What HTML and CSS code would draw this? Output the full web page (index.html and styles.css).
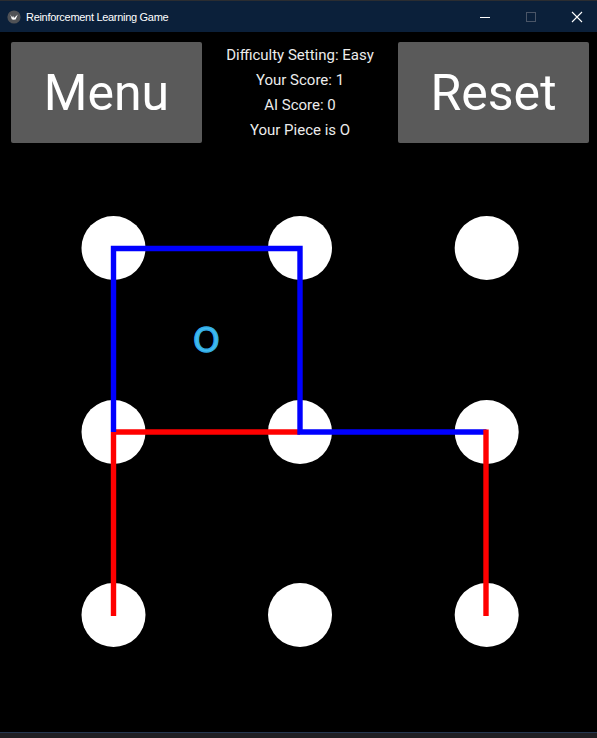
FILE: index.html
```html
<!DOCTYPE html>
<html>
<head>
<meta charset="utf-8">
<title>Reinforcement Learning Game</title>
<link rel="stylesheet" href="styles.css">
</head>
<body>
<div class="window">
  <div class="titlebar">
    <div class="app-icon">
      <svg width="14" height="14" viewBox="0 0 14 14">
        <circle cx="7" cy="7" r="6.6" fill="#505256"/>
        <path d="M3.2 4.2 L5.2 7.6 L6.1 5.8 L7 8 L10.8 4.6 L8.6 9.4 L6.3 9.8 L4.8 9.2 Z" fill="#ffffff"/>
      </svg>
    </div>
    <div class="title">Reinforcement Learning Game</div>
    <div class="controls">
      <div class="ctl">
        <svg width="12" height="12" viewBox="0 0 12 12"><line x1="1" y1="6.5" x2="11" y2="6.5" stroke="#ffffff" stroke-width="1"/></svg>
      </div>
      <div class="ctl">
        <svg width="12" height="12" viewBox="0 0 12 12"><rect x="1.5" y="1.5" width="9" height="9" fill="none" stroke="#4a5567" stroke-width="1"/></svg>
      </div>
      <div class="ctl">
        <svg width="12" height="12" viewBox="0 0 12 12"><path d="M1 1 L11 11 M11 1 L1 11" stroke="#ffffff" stroke-width="1.1"/></svg>
      </div>
    </div>
  </div>
  <div class="app">
    <div class="header">
      <div class="btn">Menu</div>
      <div class="info">
        <div>Difficulty Setting: Easy</div>
        <div>Your Score: 1</div>
        <div>AI Score: 0</div>
        <div>Your Piece is O</div>
      </div>
      <div class="btn">Reset</div>
    </div>
    <svg class="board" width="597" height="592" viewBox="0 140 597 592">
      <g fill="#ffffff">
        <circle cx="113.5" cy="248" r="32"/>
        <circle cx="300" cy="248" r="32"/>
        <circle cx="486.7" cy="248" r="32"/>
        <circle cx="113.5" cy="432" r="32"/>
        <circle cx="300" cy="432" r="32"/>
        <circle cx="486.7" cy="432" r="32"/>
        <circle cx="113.5" cy="615" r="32"/>
        <circle cx="300" cy="615" r="32"/>
        <circle cx="486.7" cy="615" r="32"/>
      </g>
      <g stroke-width="5.4" fill="none" stroke-linecap="butt">
        <line x1="113.5" y1="432" x2="300" y2="432" stroke="#ff0000"/>
        <path d="M113.5 432 L113.5 248.5 L300 248.5 L300 432 L486.5 432" stroke="#0000ff" stroke-linejoin="miter"/>
        <line x1="113.5" y1="432" x2="113.5" y2="616" stroke="#ff0000"/>
        <line x1="486" y1="429.5" x2="486" y2="616" stroke="#ff0000"/>
      </g>
      <text class="piece" x="206.3" y="351.5" text-anchor="middle">O</text>
    </svg>
  </div>
  <div class="bottombar"></div>
</div>
</body>
</html>
```
FILE: styles.css
```css
html, body {
  margin: 0;
  padding: 0;
  background: #000000;
}

.window {
  width: 597px;
  height: 738px;
  display: flex;
  flex-direction: column;
  overflow: hidden;
}

.titlebar {
  height: 31px;
  border-top: 1px solid #2b2d31;
  background: #0b203a;
  display: flex;
  align-items: center;
  flex-shrink: 0;
}

.app-icon {
  width: 14px;
  height: 14px;
  margin-left: 7px;
  display: flex;
}

.title {
  margin-left: 5px;
  color: #ffffff;
  font-family: "Liberation Sans", Arial, sans-serif;
  font-size: 11px;
  letter-spacing: -0.3px;
  flex: 1;
}

.controls {
  display: flex;
  height: 100%;
  margin-right: -3px;
}

.ctl {
  width: 46px;
  display: flex;
  align-items: center;
  justify-content: center;
}

.ctl svg {
  display: block;
}

.app {
  height: 700px;
  background: #000000;
  display: flex;
  flex-direction: column;
}

.header {
  display: grid;
  grid-template-columns: 191px 1fr 191px;
  height: 98px;
  padding: 10px 8px 0 11px;
  flex-shrink: 0;
}

.btn {
  background: #5a5a5a;
  border-radius: 2px;
  color: #ffffff;
  font-family: Roboto, "Liberation Sans", sans-serif;
  font-size: 50px;
  display: flex;
  align-items: center;
  justify-content: center;
}

.info {
  font-family: Roboto, "Liberation Sans", sans-serif;
  font-size: 15px;
  line-height: 25px;
  padding-top: 1px;
  color: #ececec;
  text-align: center;
}

.board {
  display: block;
}

.piece {
  font-family: "DejaVu Sans", sans-serif;
  font-size: 34px;
  fill: #3fbcf0;
  stroke: #34ade6;
  stroke-width: 1.4;
}

.bottombar {
  height: 5px;
  border-top: 1px solid #243650;
  background: #1f1f23;
  flex-shrink: 0;
}
```
